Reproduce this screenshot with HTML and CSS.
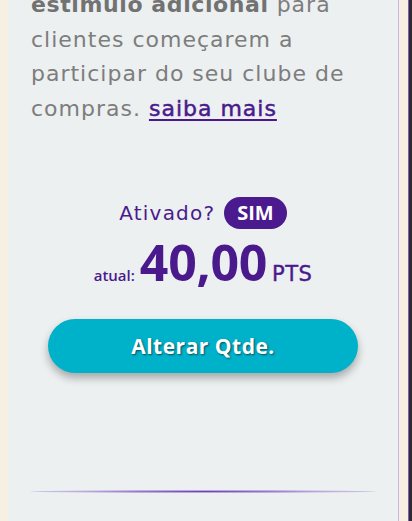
FILE: index.html
```html
<!DOCTYPE html>
<html lang="pt-BR">
<head>
<meta charset="utf-8">
<title>Clube de compras</title>
<link rel="stylesheet" href="styles.css">
</head>
<body>
<div class="page">
  <main class="card">
    <p class="intro"><strong>estimulo adicional</strong> para clientes começarem a participar do seu clube de compras. <a href="#" class="more">saiba mais</a></p>
    <div class="status">
      <span class="status-label">Ativado?</span>
      <span class="pill">SIM</span>
    </div>
    <div class="points">
      <span class="points-label">atual:</span>
      <span class="points-value">40,00</span>
      <span class="points-unit">PTS</span>
    </div>
    <button class="action" type="button">Alterar Qtde.</button>
    <div class="divider"></div>
  </main>
  <div class="gutter"></div>
  <div class="scrollbar"></div>
</div>
</body>
</html>
```
FILE: styles.css
```css
html, body {
  margin: 0;
  padding: 0;
}
body {
  background: #f7efe2;
  height: 521px;
  overflow: hidden;
  font-family: "Open Sans", "DejaVu Sans", sans-serif;
}
.page {
  display: flex;
  height: 521px;
  padding-left: 8px;
}
.card {
  width: 390px;
  background: #ecf0f1;
  border-right: 1px solid #c8b9e4;
  display: flex;
  flex-direction: column;
  align-items: center;
  overflow: hidden;
}
.gutter {
  width: 9px;
}
.scrollbar {
  width: 3px;
  background: #2c2b30;
  border-left: 1px solid #7b5fbf;
}
.intro {
  align-self: stretch;
  margin: -12px 0 0 0;
  padding: 0 20px 0 23px;
  font-family: "DejaVu Sans", sans-serif;
  font-size: 22px;
  letter-spacing: 1px;
  line-height: 34.5px;
  color: #7d7d7d;
}
.intro strong {
  color: #727272;
  font-weight: 700;
  letter-spacing: 0.6px;
}
.more {
  color: #4a1a8c;
  font-weight: 400;
  -webkit-text-stroke: 0.5px #4a1a8c;
  text-decoration: underline;
  text-decoration-thickness: 2px;
  text-underline-offset: 3px;
}
.status {
  margin-top: 71px;
  display: flex;
  align-items: center;
  gap: 9px;
}
.status-label {
  font-family: "DejaVu Sans", sans-serif;
  font-size: 20px;
  color: #4a1a8c;
  letter-spacing: 1.2px;
}
.pill {
  background: #4b1a8e;
  color: #ffffff;
  font-weight: 700;
  font-size: 20px;
  line-height: 32px;
  padding: 0 13px;
  border-radius: 16px;
}
.points {
  display: flex;
  align-items: baseline;
  gap: 5px;
  color: #4a1a8c;
  margin-top: 2px;
}
.points-label {
  font-size: 15px;
  font-weight: 600;
}
.points-value {
  font-size: 50px;
  font-weight: 700;
  line-height: 62px;
  letter-spacing: -0.3px;
}
.points-unit {
  font-family: "DejaVu Sans", sans-serif;
  font-size: 21px;
  font-weight: 400;
  letter-spacing: 0.5px;
  -webkit-text-stroke: 0.4px #4a1a8c;
}
.action {
  margin-top: 26px;
  width: 310px;
  height: 54px;
  border: none;
  border-radius: 27px;
  background: #00b1ca;
  color: #ffffff;
  font-family: inherit;
  font-size: 21px;
  font-weight: 700;
  letter-spacing: 0.5px;
  text-shadow: 1px 1px 2px rgba(0, 0, 0, 0.55);
  box-shadow: 0 5px 8px rgba(0, 0, 0, 0.3);
  cursor: pointer;
}
.divider {
  margin-top: 117px;
  width: 346px;
  height: 3px;
  border-radius: 50%;
  background: radial-gradient(ellipse at center, #6b3fb3 0%, rgba(140, 100, 200, 0.55) 45%, rgba(180, 160, 220, 0) 100%);
}
```
